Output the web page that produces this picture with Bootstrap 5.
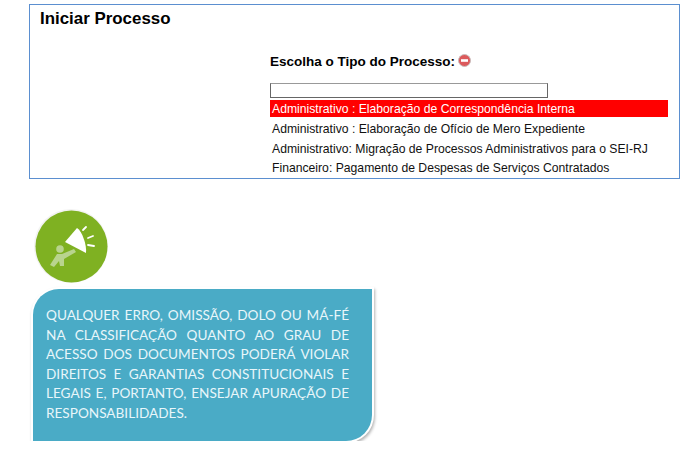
<!DOCTYPE html>
<html lang="pt">
<head>
  <meta charset="UTF-8" />
  <meta name="viewport" content="width=device-width, initial-scale=1" />
  <title>Iniciar Processo</title>
  <link href="https://cdn.jsdelivr.net/npm/bootstrap@5.3.0/dist/css/bootstrap.min.css" rel="stylesheet" />
  <style>
    body { font-family: "Liberation Sans", Arial, sans-serif; background: #fff; color: #000; overflow: hidden; }
    .proc-box { margin: 4px 0 0 29px; width: 651px; height: 175px; border: 1px solid #5b8fd0; padding: 3px 10px 0 10px; }
    .proc-title { font-size: 16.9px; font-weight: 700; line-height: 22px; margin: 0; }
    .proc-area { margin: 20px 0 0 230px; width: 398px; }
    .proc-label { font-size: 13.5px; font-weight: 700; line-height: 18px; height: 23px; }
    .proc-stop { margin-left: 3px; margin-bottom: 3px; }
    .proc-input { display: block; width: 278px; height: 15px; padding: 0; margin-top: 10px; border: 1px solid; border-color: #999 #666 #666 #666; }
    .proc-item { font-size: 12.2px; line-height: 16px; height: 19.5px; padding: 2px 0 0 2px; white-space: nowrap; color: #111; }
    .proc-item-on { background: #f00; color: #fff; height: 17px; padding: 1px 0 0 2px; margin-top: 2px; margin-bottom: 2px; }
    .note-wrap { margin: 30px 0 0 32px; }
    .note-icon { width: 74px; height: 74px; margin-left: 2px; margin-bottom: 6px; display: block; }
    .note-box { width: 339px; height: 152px; margin-left: 1px; background: #4aabc6; color: #e8f6fa; border-radius: 26px 0 26px 0; box-shadow: 0 0 0 2px #fff, 1px 2px 3px 2px #b5b5b5; padding: 17px 23px 0 13px; font-family: Lato, "Open Sans", sans-serif; font-size: 13.6px; line-height: 19.5px; }
    .note-line { text-align: justify; text-align-last: justify; white-space: nowrap; }
    .note-line-end { text-align-last: left; }
  </style>
</head>
<body>

<div class="proc-box">
  <h1 class="proc-title">Iniciar Processo</h1>
  <div class="proc-area">
    <div class="proc-label d-flex align-items-center">Escolha o Tipo do Processo:
      <svg class="proc-stop" width="13" height="13" viewBox="0 0 13 13">
        <circle cx="6.5" cy="6.5" r="6" fill="#dc5a5c" stroke="#c9bcbc" stroke-width="1" />
        <rect x="3" y="5.2" width="7" height="2.6" fill="#fff" />
      </svg>
    </div>
    <input class="proc-input" type="text" aria-label="Tipo do processo" />
    <div class="proc-item proc-item-on">Administrativo : Elaboração de Correspondência Interna</div>
    <div class="proc-item">Administrativo : Elaboração de Ofício de Mero Expediente</div>
    <div class="proc-item">Administrativo: Migração de Processos Administrativos para o SEI-RJ</div>
    <div class="proc-item">Financeiro: Pagamento de Despesas de Serviços Contratados</div>
  </div>
</div>

<div class="note-wrap">
  <svg class="note-icon" viewBox="0 0 74 74">
    <circle cx="37" cy="37" r="37" fill="#f3f3f3" />
    <circle cx="37.5" cy="37.5" r="36" fill="#7fb122" />
    <g fill="#b9d48e">
      <circle cx="26" cy="40" r="3.8" />
      <path d="M23 45 L28 45 L40 40 L42 43 L30 50 L30 57 L26 57 L25 52 L20 58 L16 56 Z" />
    </g>
    <path d="M31 33 L43 19 C48 22 53 36 52 44 Z" fill="#fff" />
    <g stroke="#fff" stroke-width="1.8" stroke-linecap="round" fill="none">
      <path d="M49 21 L52 18" />
      <path d="M54 29 L59 27" />
      <path d="M54 36 L60 37" />
    </g>
  </svg>
  <div class="note-box">
    <div class="note-line">QUALQUER ERRO, OMISSÃO, DOLO OU MÁ-FÉ</div>
    <div class="note-line">NA CLASSIFICAÇÃO QUANTO AO GRAU DE</div>
    <div class="note-line">ACESSO DOS DOCUMENTOS PODERÁ VIOLAR</div>
    <div class="note-line">DIREITOS E GARANTIAS CONSTITUCIONAIS E</div>
    <div class="note-line">LEGAIS E, PORTANTO, ENSEJAR APURAÇÃO DE</div>
    <div class="note-line note-line-end">RESPONSABILIDADES.</div>
  </div>
</div>

<script src="https://cdn.jsdelivr.net/npm/bootstrap@5.3.0/dist/js/bootstrap.bundle.min.js"></script>
</body>
</html>
